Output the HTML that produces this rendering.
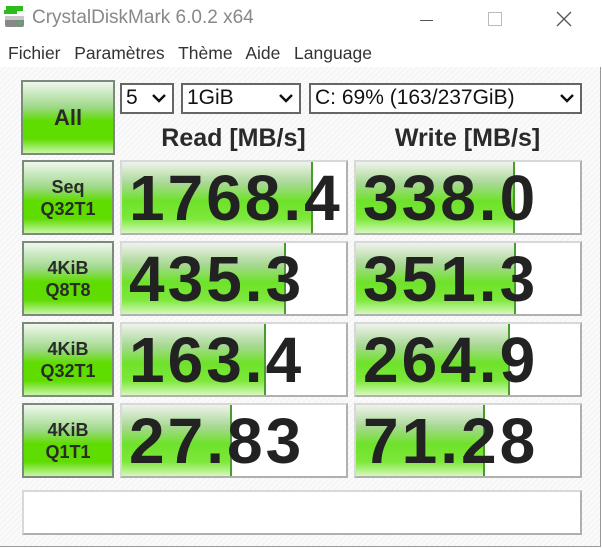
<!DOCTYPE html>
<html><head><style>
body{margin:0;width:602px;height:548px;overflow:hidden;background:#fff;font-family:"Liberation Sans",sans-serif;position:relative}
.a{position:absolute}
.win{left:0;top:67px;width:600px;height:479px;background:repeating-linear-gradient(135deg,#fafafa 0 3px,#f2f2f2 3px 4px);border-right:1px solid #999;border-bottom:1px solid #999}
.btn{background:linear-gradient(#f0f7ee 0%,#9fd98a 35%,#5fdc00 55%,#5fdc00 80%,#c8f5a8 100%);border:2px solid #7b8a7a;box-sizing:border-box;color:#2a2a2a;font-weight:bold;text-align:center;display:flex;align-items:center;justify-content:center;font-size:18px;line-height:22px}
.box{background:#fff;border:2px solid #b0b0b0;border-top-color:#d8d8d8;border-left-color:#d8d8d8;box-sizing:border-box;overflow:hidden}
.bar{position:absolute;left:0;top:0;bottom:0;background:linear-gradient(#eef3ec 0%,#a8d894 30%,#6ee22a 55%,#7de83a 80%,#d6f8bc 100%);border-right:2px solid #4a9a30}
.num{position:absolute;left:7px;top:0;font-weight:bold;font-size:64px;letter-spacing:3px;color:#222;line-height:72px}
.cb{background:#fff;border:2px solid #666;box-sizing:border-box;font-size:21px;line-height:26px;padding-left:4px;color:#111}
.cb svg{position:absolute;right:6px;top:9px}
</style></head><body>
<svg class="a" style="left:4px;top:6px" width="20" height="22"><rect x="2" y="0" width="17" height="5" fill="#2cbc1c"/><rect x="0" y="4" width="13" height="4" fill="#2cbc1c"/><rect x="1" y="10" width="19" height="11" rx="2" fill="#888"/><rect x="1" y="10" width="19" height="4" fill="#c8c8c8"/><rect x="14" y="16" width="3" height="2" fill="#3c3"/></svg>
<div class="a" style="left:32px;top:7px;font-size:19px;color:#888">CrystalDiskMark 6.0.2 x64</div>
<div class="a" style="left:420px;top:20px;width:13px;height:1px;background:#555"></div>
<div class="a" style="left:488px;top:12px;width:12px;height:12px;border:1px solid #bbb"></div>
<svg class="a" style="left:556px;top:11px" width="16" height="16"><path d="M1 1L15 15M15 1L1 15" stroke="#555" stroke-width="1.3"/></svg>
<div class="a" style="left:8px;top:43px;font-size:17.5px;color:#333;word-spacing:2px">Fichier&nbsp; Paramètres&nbsp; Thème&nbsp; Aide&nbsp; Language</div>
<div class="a win"></div>
<div class="a btn" style="left:21px;top:80px;width:94px;height:75px;font-size:22px">All</div>
<div class="a cb" style="left:120px;top:83px;width:54px;height:31px">5<svg width="14" height="9"><path d="M1 1L7 7L13 1" stroke="#111" stroke-width="2.4" fill="none"/></svg></div>
<div class="a cb" style="left:181px;top:83px;width:120px;height:31px">1GiB<svg width="14" height="9"><path d="M1 1L7 7L13 1" stroke="#111" stroke-width="2.4" fill="none"/></svg></div>
<div class="a cb" style="left:309px;top:83px;width:273px;height:31px">C: 69% (163/237GiB)<svg width="14" height="9"><path d="M1 1L7 7L13 1" stroke="#111" stroke-width="2.4" fill="none"/></svg></div>
<div class="a" style="left:120px;top:124px;width:227px;text-align:center;font-weight:bold;font-size:25px;color:#2a2a2a">Read [MB/s]</div>
<div class="a" style="left:354px;top:124px;width:227px;text-align:center;font-weight:bold;font-size:25px;color:#2a2a2a">Write [MB/s]</div>

<div class="a btn" style="left:22px;top:160px;width:92px;height:75px">Seq<br>Q32T1</div>
<div class="a box" style="left:120px;top:160px;width:228px;height:75px"><div class="bar" style="width:189px"></div><div class="num">1768.4</div></div>
<div class="a box" style="left:354px;top:160px;width:228px;height:75px"><div class="bar" style="width:157px"></div><div class="num">338.0</div></div>

<div class="a btn" style="left:22px;top:241px;width:92px;height:75px">4KiB<br>Q8T8</div>
<div class="a box" style="left:120px;top:241px;width:228px;height:75px"><div class="bar" style="width:162px"></div><div class="num">435.3</div></div>
<div class="a box" style="left:354px;top:241px;width:228px;height:75px"><div class="bar" style="width:158px"></div><div class="num">351.3</div></div>

<div class="a btn" style="left:22px;top:322px;width:92px;height:75px">4KiB<br>Q32T1</div>
<div class="a box" style="left:120px;top:322px;width:228px;height:75px"><div class="bar" style="width:142px"></div><div class="num">163.4</div></div>
<div class="a box" style="left:354px;top:322px;width:228px;height:75px"><div class="bar" style="width:152px"></div><div class="num">264.9</div></div>

<div class="a btn" style="left:22px;top:403px;width:92px;height:75px">4KiB<br>Q1T1</div>
<div class="a box" style="left:120px;top:403px;width:228px;height:75px"><div class="bar" style="width:108px"></div><div class="num">27.83</div></div>
<div class="a box" style="left:354px;top:403px;width:228px;height:75px"><div class="bar" style="width:127px"></div><div class="num">71.28</div></div>

<div class="a box" style="left:22px;top:490px;width:560px;height:45px"></div>
</body></html>
